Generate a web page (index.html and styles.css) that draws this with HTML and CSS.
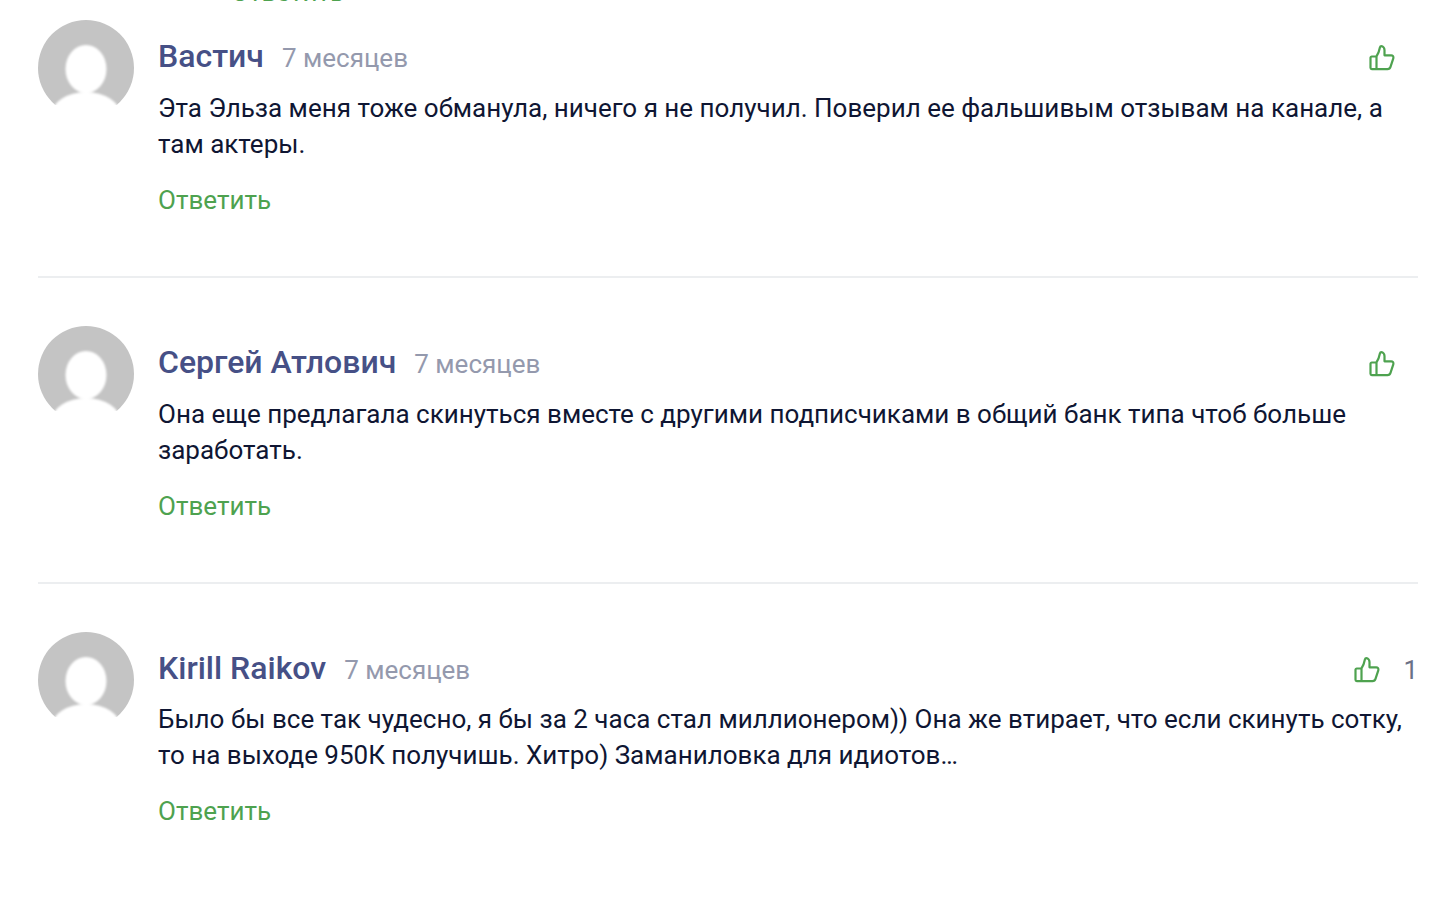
FILE: index.html
```html
<!DOCTYPE html>
<html lang="ru">
<head>
    <meta charset="UTF-8">
    <title>Комментарии</title>
    <link rel="stylesheet" href="styles.css">
</head>
<body>
    <svg class="sprite" width="0" height="0">
        <defs>
            <filter id="soft"><feGaussianBlur stdDeviation="1.2"/></filter>
            <clipPath id="round"><circle cx="48" cy="48" r="48"/></clipPath>
        </defs>
        <symbol id="ava" viewBox="0 0 96 96">
            <g clip-path="url(#round)">
                <rect width="96" height="85" fill="#c4c4c4"/>
                <g fill="#fff" filter="url(#soft)">
                    <ellipse cx="48" cy="49" rx="20.500" ry="24"/>
                    <ellipse cx="48" cy="94" rx="34" ry="22"/>
                </g>
            </g>
        </symbol>
        <symbol id="like" viewBox="0 0 28 28">
            <path d="M8.500 12.500H3.800c-.8 0-1.300.6-1.300 1.300v10c0 .8.6 1.300 1.300 1.300h15.700c1.500 0 2.600-.8 3-2.200l2.800-8.600c.5-1.600-.5-3-2.200-3h-6.600V6c0-2-1.400-3.800-3.100-3.800-.8 0-1.300.5-1.500 1.300-.7 3.700-1.700 6.500-3.500 9zM8.500 12.500V25"/>
        </symbol>
    </svg>

    <div class="comments">
        <div class="prev-reply"><a class="reply-link" href="#">Ответить</a></div>

        <div class="comment">
            <div class="avatar">
                <svg viewBox="0 0 96 96"><use href="#ava"/></svg>
            </div>
            <div class="comment-body">
                <div class="comment-head">
                    <span class="author">Вастич</span>
                    <span class="date">7 месяцев</span>
                    <span class="likes">
                        <svg class="like-icon"><use href="#like"/></svg>
                    </span>
                </div>
                <p class="comment-text">Эта Эльза меня тоже обманула, ничего я не получил. Поверил ее фальшивым отзывам на канале, а там актеры.</p>
                <a class="reply-link" href="#">Ответить</a>
            </div>
        </div>

        <div class="comment">
            <div class="avatar">
                <svg viewBox="0 0 96 96"><use href="#ava"/></svg>
            </div>
            <div class="comment-body">
                <div class="comment-head">
                    <span class="author">Сергей Атлович</span>
                    <span class="date">7 месяцев</span>
                    <span class="likes">
                        <svg class="like-icon"><use href="#like"/></svg>
                    </span>
                </div>
                <p class="comment-text">Она еще предлагала скинуться вместе с другими подписчиками в общий банк типа чтоб больше заработать.</p>
                <a class="reply-link" href="#">Ответить</a>
            </div>
        </div>

        <div class="comment last">
            <div class="avatar">
                <svg viewBox="0 0 96 96"><use href="#ava"/></svg>
            </div>
            <div class="comment-body">
                <div class="comment-head">
                    <span class="author">Kirill Raikov</span>
                    <span class="date">7 месяцев</span>
                    <span class="likes">
                        <svg class="like-icon"><use href="#like"/></svg>
                        <span class="like-count">1</span>
                    </span>
                </div>
                <p class="comment-text">Было бы все так чудесно, я бы за 2 часа стал миллионером)) Она же втирает, что если скинуть сотку, то на выходе 950К получишь. Хитро) Заманиловка для идиотов…</p>
                <a class="reply-link" href="#">Ответить</a>
            </div>
        </div>
    </div>
</body>
</html>
```

FILE: styles.css
```css
/* Comment list */
body {
    font-family: 'Roboto', sans-serif;
    background: #fff;
    margin: 0;
    padding: 0;
    color: #0f1633;
    overflow: hidden;
}

.sprite {
    position: absolute;
}

.comments {
    width: 1380px;
    margin-left: 38px;
}

/* tail of the comment above, mostly scrolled off */
.prev-reply {
    height: 20px;
    padding-left: 193px;
    overflow: hidden;
}

.prev-reply .reply-link {
    display: block;
    margin-top: -26px;
}

.comment {
    display: flex;
    gap: 24px;
    height: 257px;
    margin-bottom: 49px;
    position: relative;
}

.comment::after {
    content: "";
    position: absolute;
    left: 0;
    right: 0;
    top: 256px;
    height: 2px;
    background: #eceef0;
}

.comment.last::after {
    display: none;
}

.avatar {
    width: 96px;
    height: 96px;
    flex: none;
}

.avatar svg {
    display: block;
    width: 96px;
    height: 96px;
}

.comment-body {
    flex: 1;
    min-width: 0;
}

.comment-head {
    display: flex;
    align-items: baseline;
    height: 36px;
    margin-top: 18px;
    padding-right: 2px;
}

.author {
    font-size: 32px;
    font-weight: 500;
    line-height: 36px;
    color: #465086;
}

.date {
    margin-left: 18px;
    font-size: 26px;
    line-height: 36px;
    color: #9499ad;
}

.likes {
    margin-left: auto;
    display: flex;
    align-items: center;
    align-self: center;
    position: relative;
    top: 2px;
}

.like-icon {
    width: 28px;
    height: 28px;
    fill: none;
    stroke: #4ea24f;
    stroke-width: 2.2;
    stroke-linejoin: round;
    margin-right: 20px;
}

.like-count {
    font-size: 26px;
    line-height: 28px;
    color: #6b7086;
    margin-left: 2px;
    margin-right: -2px;
}

.comment-text {
    margin: 16px 0 0;
    font-size: 26px;
    line-height: 36px;
}

.last .comment-text {
    margin-top: 15px;
}

.reply-link {
    display: inline-block;
    margin-top: 20px;
    font-size: 26px;
    line-height: 36px;
    color: #4ea24f;
    text-decoration: none;
}
```
